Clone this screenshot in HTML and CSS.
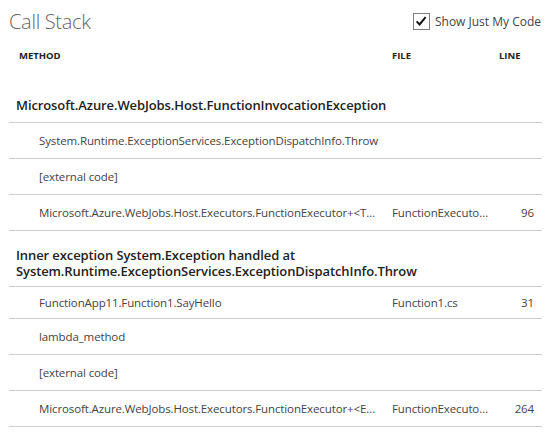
FILE: index.html
```html
<!DOCTYPE html>
<html>
<head>
<meta charset="utf-8">
<link rel="stylesheet" href="styles.css">
</head>
<body>
<div class="panel">
  <div class="titlebar">
    <h1 class="title">Call Stack</h1>
    <label class="jmc">
      <span class="box"><svg width="14" height="14" viewBox="0 0 14 14"><path d="M2.6 7.4 L5.6 10.4 L11.6 3.2" fill="none" stroke="#111" stroke-width="2"/></svg></span>
      <span class="jmc-text">Show Just My Code</span>
    </label>
  </div>
  <div class="colhead">
    <div class="c-method">METHOD</div>
    <div class="c-file">FILE</div>
    <div class="c-line">LINE</div>
  </div>
  <div class="group g1">Microsoft.Azure.WebJobs.Host.FunctionInvocationException</div>
  <div class="row"><div class="c-method">System.Runtime.ExceptionServices.ExceptionDispatchInfo.Throw</div><div class="c-file"></div><div class="c-line"></div></div>
  <div class="row"><div class="c-method">[external code]</div><div class="c-file"></div><div class="c-line"></div></div>
  <div class="row"><div class="c-method">Microsoft.Azure.WebJobs.Host.Executors.FunctionExecutor+&lt;T…</div><div class="c-file">FunctionExecuto…</div><div class="c-line">96</div></div>
  <div class="group g2">Inner exception System.Exception handled at System.Runtime.ExceptionServices.ExceptionDispatchInfo.Throw</div>
  <div class="row short"><div class="c-method">FunctionApp11.Function1.SayHello</div><div class="c-file">Function1.cs</div><div class="c-line">31</div></div>
  <div class="row"><div class="c-method">lambda_method</div><div class="c-file"></div><div class="c-line"></div></div>
  <div class="row"><div class="c-method">[external code]</div><div class="c-file"></div><div class="c-line"></div></div>
  <div class="row"><div class="c-method">Microsoft.Azure.WebJobs.Host.Executors.FunctionExecutor+&lt;E…</div><div class="c-file">FunctionExecuto…</div><div class="c-line">264</div></div>
</div>
</body>
</html>
```

FILE: styles.css
```css
html, body {
  margin: 0;
  padding: 0;
  background: #fff;
}
body {
  font-family: "Open Sans", "Liberation Sans", sans-serif;
  color: #333;
}
.panel {
  padding: 0 7px 0 9px;
}
.titlebar {
  display: flex;
  justify-content: space-between;
  align-items: center;
  height: 42px;
}
.title {
  margin: 0;
  font-size: 20px;
  font-weight: 300;
  color: #666;
  letter-spacing: -0.3px;
}
.jmc {
  display: flex;
  align-items: center;
  gap: 5px;
  margin-right: 1px;
}
.box {
  width: 15px;
  height: 15px;
  border: 1px solid #808080;
  display: flex;
  align-items: center;
  justify-content: center;
}
.jmc-text {
  font-size: 12px;
  color: #444;
}
.colhead, .row {
  display: grid;
  grid-template-columns: 383px 107px 1fr;
  align-items: center;
}
.colhead {
  height: 26px;
  font-size: 9.5px;
  font-weight: 700;
  color: #222;
}
.colhead .c-method {
  padding-left: 10px;
}
.group {
  font-size: 13px;
  font-weight: 600;
  color: #222;
  border-bottom: 1px solid #ccc;
  line-height: 16px;
  letter-spacing: -0.1px;
}
.g1 {
  padding: 29px 0 9px 7px;
}
.g2 {
  padding: 16px 0 7px 7px;
}
.row {
  height: 35px;
  border-bottom: 1px solid #ccc;
  font-size: 11.5px;
  color: #444;
  letter-spacing: -0.12px;
}
.row.short {
  height: 31px;
}
.row .c-method {
  padding-left: 30px;
  padding-right: 6px;
}
.c-method, .c-file {
  white-space: nowrap;
  overflow: hidden;
  text-overflow: ellipsis;
}
.row .c-file {
  padding-right: 4px;
}
.row .c-line {
  text-align: right;
  padding-right: 8px;
}
```
